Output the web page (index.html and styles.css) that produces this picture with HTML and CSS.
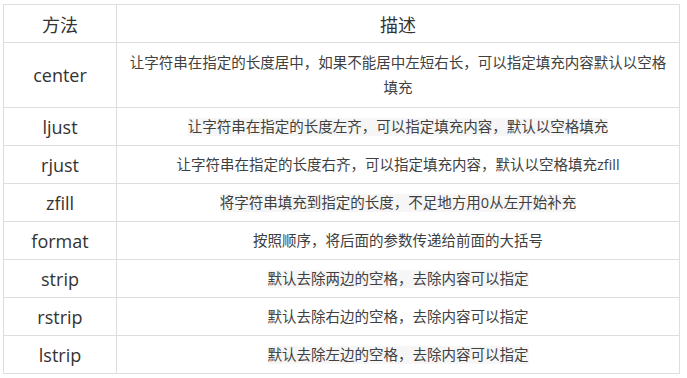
FILE: index.html
```html
<!DOCTYPE html>
<html lang="zh">
<head>
<meta charset="utf-8">
<link rel="stylesheet" href="styles.css">
</head>
<body>
<table class="methods">
  <colgroup><col class="c1"><col class="c2"></colgroup>
  <thead>
    <tr><th>方法</th><th>描述</th></tr>
  </thead>
  <tbody>
    <tr class="tall"><td class="name">center</td><td class="desc">让字符串在指定的长度居中，如果不能居中左短右长，可以指定填充内容默认以空格填充</td></tr>
    <tr><td class="name">ljust</td><td class="desc"><span class="hl">让字符串在指定的长度左齐，可以指定填充内容，默认以空格填充</span></td></tr>
    <tr><td class="name">rjust</td><td class="desc">让字符串在指定的长度右齐，可以指定填充内容，默认以空格填充zfill</td></tr>
    <tr><td class="name">zfill</td><td class="desc"><span class="hl">将字符串填充到指定的长度，不足地方用0从左开始补充</span></td></tr>
    <tr><td class="name">format</td><td class="desc">按照顺序，将后面的参数传递给前面的大括号</td></tr>
    <tr><td class="name">strip</td><td class="desc"><span class="hl">默认去除两边的空格，去除内容可以指定</span></td></tr>
    <tr><td class="name">rstrip</td><td class="desc">默认去除右边的空格，去除内容可以指定</td></tr>
    <tr><td class="name">lstrip</td><td class="desc"><span class="hl">默认去除左边的空格，去除内容可以指定</span></td></tr>
  </tbody>
</table>
</body>
</html>
```
FILE: styles.css
```css
html, body {
  margin: 0;
  padding: 0;
  background: #ffffff;
}
body {
  padding: 4px 0 0 3px;
  font-family: "Open Sans", "Noto Sans CJK SC", sans-serif;
  color: #333333;
}
.methods {
  border-collapse: collapse;
  table-layout: fixed;
  width: 677px;
}
.c1 { width: 113px; }
.methods th,
.methods td {
  border: 1px solid #dedede;
  text-align: center;
  vertical-align: middle;
  padding: 0 8px;
  height: 37px;
}
.methods th {
  font-weight: normal;
  font-size: 18px;
  color: #333333;
}
.name {
  font-size: 18px;
  color: #333333;
}
.desc {
  font-size: 14.5px;
  line-height: 25px;
  color: #404040;
}
.tall td {
  height: 64px;
}
.hl {
  display: inline-block;
  background: #f6f6f6;
  line-height: 18px;
}
```
